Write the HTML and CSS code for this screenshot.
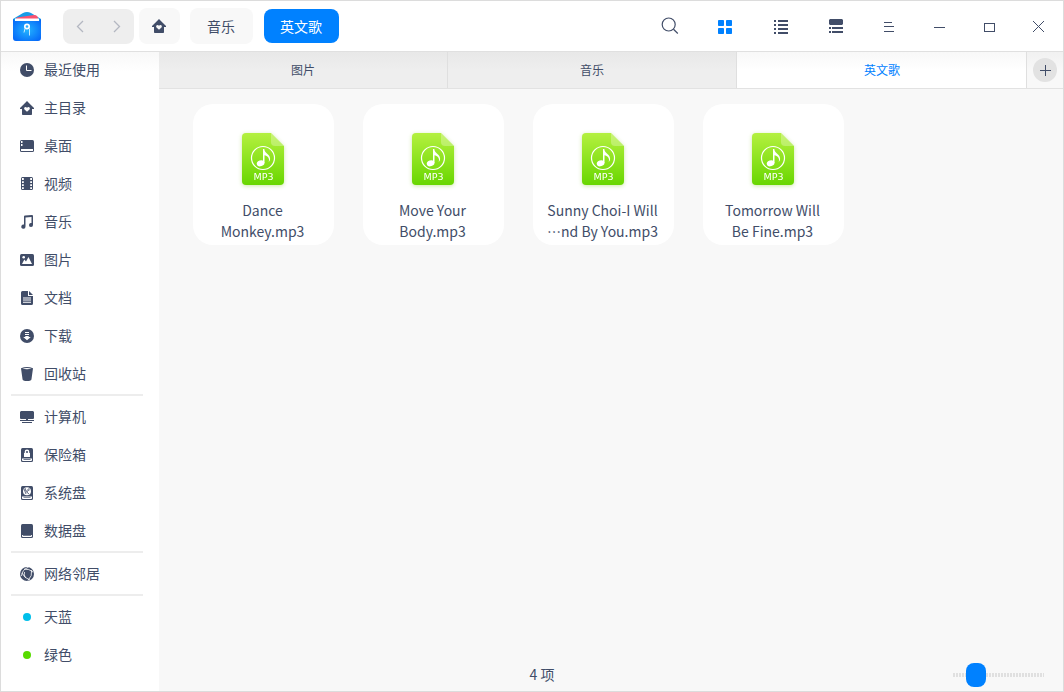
FILE: index.html
```html
<!DOCTYPE html>
<html lang="zh-CN">
<head>
<meta charset="utf-8">
<title>英文歌</title>
<link rel="stylesheet" href="styles.css">
</head>
<body>
<svg class="defs" width="0" height="0" aria-hidden="true">
  <defs>
    <linearGradient id="green" x1="0" y1="0" x2="0" y2="1"><stop offset="0" stop-color="#b4f03f"/><stop offset="1" stop-color="#68d600"/></linearGradient>
    <radialGradient id="bag" cx=".5" cy=".5" r=".65"><stop offset="0" stop-color="#23b4ff"/><stop offset="1" stop-color="#0566f8"/></radialGradient>
    <symbol id="home" viewBox="0 0 14 14"><path fill-rule="evenodd" d="M7 0l2.7 2.7L14 7v1h-2v5.2a.8.8 0 0 1-.8.8H2.8a.8.8 0 0 1-.8-.8V8H0V7l4.300-4.300zM7 10.800l2.500-2.400c1.300-1.500-.9-3.400-2.500-1.700-1.600-1.700-3.800.2-2.500 1.700z"/></symbol>
    <symbol id="mp3" viewBox="0 0 52 62">
      <path fill="url(#green)" d="M9 4h25l13 13v35a4 4 0 0 1-4 4H9a4 4 0 0 1-4-4V8a4 4 0 0 1 4-4z"/>
      <path fill="#fff" fill-opacity=".28" d="M34 4l13 13h-9a4 4 0 0 1-4-4z"/>
      <circle cx="26" cy="29" r="11.500" fill="none" stroke="#fff" stroke-width="1.200"/>
      <ellipse cx="23.600" cy="34.300" rx="3.900" ry="2.900" fill="#fff" transform="rotate(-20 23.600 34.300)"/>
      <path fill="#fff" d="M26 20h1.300c.2 4.500 5.700 5.200 5.800 9.500 0 1.500-.5 2.600-1.400 3.400 1.300-4.200-1.500-6-4.200-6.700V34H26z"/>
      <text x="26.500" y="51" text-anchor="middle" class="file-kind">MP3</text>
    </symbol>
  </defs>
</svg>
<div class="window">
  <header class="titlebar">
    <svg class="logo" viewBox="0 0 30 32">
      <path fill="#159ce8" d="M1 9l10-6q4-2 8 0l10 6v5H1z"/>
      <path fill="#fa5270" d="M5 7.500l17-2.500q4 0 4 4H4z"/>
      <path fill="#fff" d="M3 8.500h24v3H3z"/>
      <path fill="url(#bag)" d="M1 9l2 2h24l2-2v19q0 3-3 3H4q-3 0-3-3z"/>
      <circle cx="15" cy="16.500" r="2.200" fill="#2aaefc" stroke="#fff" stroke-width="1.700"/>
      <path fill="none" stroke="#c5eaff" stroke-width="1" d="M13 18.500l-1 4M17.500 18.500v7"/>
    </svg>
    <div class="history">
      <svg viewBox="0 0 70 34"><path d="M20 12l-5.500 5.500 5.500 5.500M51 12l5.500 5.500-5.500 5.500"/></svg>
    </div>
    <nav class="crumbs">
      <div class="crumb crumb-home"><svg class="icon"><use href="#home"/></svg></div>
      <div class="crumb crumb-folder">音乐</div>
      <div class="crumb crumb-current">英文歌</div>
    </nav>
    <div class="tools">
      <svg class="tool tool-search" viewBox="0 0 18 18"><g fill="none" stroke="#414d68" stroke-width="1.200"><circle cx="7.700" cy="7.500" r="6.500"/><path d="M12.500 12.300l4.300 4.200"/></g></svg>
      <svg class="tool tool-grid" viewBox="0 0 14 14"><rect width="6" height="6" rx=".8"/><rect x="8" width="6" height="6" rx=".8"/><rect y="8" width="6" height="6" rx=".8"/><rect x="8" y="8" width="6" height="6" rx=".8"/></svg>
      <svg class="tool tool-list" viewBox="0 0 14 14"><path d="M0 0h2v2H0zM0 4h2v2H0zM0 8h2v2H0zM0 12h2v2H0zM4 0h10v2H4zM4 4h10v2H4zM4 8h10v2H4zM4 12h10v2H4z"/></svg>
      <svg class="tool tool-detail" viewBox="0 0 14 14"><path d="M1 0h12l1 1v4l-1 1H1L0 5V1zM0 8h2v2H0zM0 12h2v2H0zM3 8h11v2H3zM3 12h11v2H3z"/></svg>
      <svg class="tool tool-menu" viewBox="0 0 10 10"><path d="M0 0h8v1H0zM0 4h10v1H0zM0 9h10v1H0z"/></svg>
      <svg class="tool tool-min" viewBox="0 0 11 1"><path d="M0 0h11v1H0z"/></svg>
      <svg class="tool tool-max" viewBox="0 0 11 9"><rect x=".5" y=".5" width="10" height="8" fill="none" stroke="#414d68"/></svg>
      <svg class="tool tool-close" viewBox="0 0 11 11"><path fill="none" stroke="#414d68" d="M0 0l11 11M11 0L0 11"/></svg>
    </div>
  </header>
  <div class="body">
    <aside class="sidebar">
      <div class="place"><svg class="icon" viewBox="0 0 14 14"><circle cx="7" cy="7" r="7"/><path class="cut-line" d="M6.500 2.500v5h5"/></svg><span>最近使用</span></div>
      <div class="place"><svg class="icon"><use href="#home"/></svg><span>主目录</span></div>
      <div class="place"><svg class="icon" viewBox="0 0 14 14"><rect y="1" width="14" height="12" rx="1.500"/><path class="cut" d="M1 2h1.500v2H1zM1 5h1.500v2H1zM1 10h12v1.500q0 .5-.5.500h-11q-.5 0-.5-.5z"/></svg><span>桌面</span></div>
      <div class="place"><svg class="icon" viewBox="0 0 14 14"><rect x="1" y="0" width="12" height="13" rx="1.500"/><path class="cut" d="M2 1h1.800v2H2zM2 4.200h1.800v1.900H2zM2 7.200h1.800v1.900H2zM2 10.200h1.800v1.800H2zM10.200 1H12v2h-1.800zM10.200 4.200H12v1.900h-1.800zM10.200 7.200H12v1.900h-1.800zM10.200 10.200H12V12h-1.800z"/></svg><span>视频</span></div>
      <div class="place"><svg class="icon" viewBox="0 0 14 14"><path d="M4 1.500q0-.9 1-1L12 0q1 0 1 1v9a2 2 0 1 1-1.500-1.900V2L5.500 2.500v9A2.100 2.100 0 1 1 4 9.600z"/></svg><span>音乐</span></div>
      <div class="place"><svg class="icon" viewBox="0 0 14 14"><rect y="1" width="14" height="12" rx="1.500"/><circle class="cut" cx="3.700" cy="4.200" r="1.300"/><path class="cut" d="M2 11l2.300-4.500L6 8.500 8.500 4l3.500 7z"/></svg><span>图片</span></div>
      <div class="place"><svg class="icon" viewBox="0 0 14 14"><path d="M2.500 0H8v5h5v7.500q0 1.500-1.500 1.500h-9Q1 14 1 12.500v-11Q1 0 2.500 0zM9 0l4 4H9z"/><path class="cut" d="M3 6.500h8v1H3zM3 8.600h8v1H3zM3 10.800h8v1H3z"/></svg><span>文档</span></div>
      <div class="place"><svg class="icon" viewBox="0 0 14 14"><circle cx="7" cy="7" r="7"/><path class="cut" d="M5 3h4v1H5zM5 5h4v1H5zM5.300 7h3.400v1h2.100L7 11.300 3.200 8h2.100z"/></svg><span>下载</span></div>
      <div class="place"><svg class="icon" viewBox="0 0 14 14"><path d="M1 1.200Q7-1.200 13 1.200L11.500 12q0 2-4.500 2t-4.500-2z"/><path class="cut" d="M2.300 1.600Q7 .2 11.700 1.600 7 3 2.300 1.600z"/></svg><span>回收站</span></div>
      <div class="rule"></div>
      <div class="place"><svg class="icon" viewBox="0 0 14 14"><path d="M1 1h12l1 1v6q0 1-1 1H1q-1 0-1-1V2zM6 9h2v2H6zM0 10h14v1H0zM2 12h10v1H2z"/></svg><span>计算机</span></div>
      <div class="place"><svg class="icon" viewBox="0 0 14 14"><rect x="1" width="12" height="14" rx="1.500"/><path class="cut" d="M2 10.500h10V12q0 1-1 1H3q-1 0-1-1zM4 5h.7V3.800a2.300 2.300 0 0 1 4.600 0V5h.7v4H4z"/><path d="M6 4.800V4a1 1 0 0 1 2 0v.8zM3.500 11.300h7v.6h-7z"/></svg><span>保险箱</span></div>
      <div class="place"><svg class="icon" viewBox="0 0 14 14"><rect x="1" width="12" height="14" rx="1.500"/><path class="cut" d="M2 10.500h10V12q0 1-1 1H3q-1 0-1-1z"/><circle class="cut" cx="7" cy="5.200" r="4"/><path d="M3.500 11.300h7v.6h-7z"/><path class="dark-line" d="M4 3l2 5M5 2q0 4 4 6M9 2v2.500Q7 3 7 4.500t1 1.700"/></svg><span>系统盘</span></div>
      <div class="place"><svg class="icon" viewBox="0 0 14 14"><rect x="1" width="12" height="14" rx="1.500"/><path class="cut" d="M2 11h.6l.6.700h7.600l.6-.7h.6v1q0 1-1 1H3q-1 0-1-1z"/></svg><span>数据盘</span></div>
      <div class="rule"></div>
      <div class="place"><svg class="icon" viewBox="0 0 14 14"><circle cx="7" cy="7" r="7"/><path class="cut-line thin" d="M8.500.2Q2 2.500 1.500 9M4 2.200Q9 1.500 13 5M2 6q2 5 8 7M11.600 3q1 6-3.600 10.500M4.500 5q-1 3 1 5.500"/></svg><span>网络邻居</span></div>
      <div class="rule"></div>
      <div class="place"><i class="tag tag-sky"></i><span>天蓝</span></div>
      <div class="place"><i class="tag tag-green"></i><span>绿色</span></div>
    </aside>
    <main class="content">
      <div class="tabs">
        <div class="tab">图片</div>
        <div class="tab">音乐</div>
        <div class="tab tab-active">英文歌</div>
        <div class="tab-add"><span class="add"><svg viewBox="0 0 11 11"><path d="M5 0h1v5h5v1H6v5H5V6H0V5h5z"/></svg></span></div>
      </div>
      <div class="files">
        <div class="file"><svg class="file-icon"><use href="#mp3"/></svg><div class="file-name">Dance<br>Monkey.mp3</div></div>
        <div class="file"><svg class="file-icon"><use href="#mp3"/></svg><div class="file-name">Move Your<br>Body.mp3</div></div>
        <div class="file"><svg class="file-icon"><use href="#mp3"/></svg><div class="file-name">Sunny Choi-I Will<br>…nd By You.mp3</div></div>
        <div class="file"><svg class="file-icon"><use href="#mp3"/></svg><div class="file-name">Tomorrow Will<br>Be Fine.mp3</div></div>
      </div>
      <footer class="status">
        <div class="count">4 项</div>
        <div class="zoom"><div class="thumb"></div></div>
      </footer>
    </main>
  </div>
</div>
</body>
</html>
```
FILE: styles.css
```css
* { box-sizing: border-box; }
body {
  margin: 0;
  font: 14px/21px "Noto Sans CJK SC", sans-serif;
  color: #414d68;
}
svg { display: block; flex: none; fill: #414d68; }
.defs { position: absolute; }
.window {
  width: 1064px;
  height: 692px;
  border: 1px solid #dcdcdc;
  background: #f8f8f8;
  display: flex;
  flex-direction: column;
}

/* Title bar */
.titlebar {
  height: 51px;
  flex: none;
  background: #fff;
  border-bottom: 1px solid #e0e0e0;
  display: flex;
  align-items: center;
  padding-left: 11px;
}
.logo { width: 30px; height: 32px; }
.history {
  width: 71px;
  height: 35px;
  margin: 0 5.500px 0 20.500px;
  border-radius: 8px;
  background: #eee;
}
.history svg { width: 70px; height: 34px; fill: none; stroke: #b3b7c1; stroke-width: 1.300; }
.crumbs { display: flex; align-items: center; }
.crumb {
  height: 36px;
  border-radius: 8px;
  background: #f8f8f8;
  display: flex;
  align-items: center;
  justify-content: center;
}
.crumb-home { width: 41px; padding-right: 1px; }
.crumb-folder { width: 63px; margin: 0 11px 0 10px; padding-right: 1px; }
.crumb-current { width: 75px; height: 34px; padding-right: 1px; background: #0081ff; color: #fff; }
.icon { width: 14px; height: 14px; }
.tools { display: flex; align-items: center; margin-left: auto; padding-right: 19px; }
.tool-search { width: 18px; height: 18px; margin-right: 39px; }
.tool-grid { width: 14px; height: 14px; fill: #0081ff; margin: 2px 42px 0 0; }
.tool-list { width: 14px; height: 14px; margin: 2px 41px 0 0; }
.tool-detail { width: 14px; height: 14px; margin-right: 41px; }
.tool-menu { width: 10px; height: 10px; margin: 2px 40px 0 0; }
.tool-min { width: 11px; height: 1px; margin: 3px 39px 0 0; }
.tool-max { width: 11px; height: 9px; margin: 3px 38px 0 0; }
.tool-close { width: 11px; height: 11px; margin-top: 1px; }

.body { display: flex; flex: 1; min-height: 0; }

/* Sidebar */
.sidebar {
  width: 158px;
  flex: none;
  background: linear-gradient(#f8f8f8, #fff 20px);
}
.place { height: 38px; display: flex; align-items: center; gap: 10px; padding-left: 19px; }
.place span { padding-bottom: 1px; }
.place:first-child { height: 37px; padding-bottom: 1px; }
.rule { width: 132px; height: 2px; margin: 1px 0 2px 10px; background: #ededed; }
.cut { fill: #fff; }
.cut-line { fill: none; stroke: #fff; stroke-width: 1; }
.thin { stroke-width: .8; }
.dark-line { fill: none; stroke: #414d68; stroke-width: .8; }
.tag { width: 8px; height: 8px; margin: 0 3px; border-radius: 50%; }
.tag-sky { background: #00bfea; }
.tag-green { background: #58db00; }

/* Tabs */
.content { flex: 1; min-width: 0; display: flex; flex-direction: column; }
.tabs { display: flex; height: 37px; flex: none; border-bottom: 1px solid #e2e2e2; font-size: 12px; }
.tab {
  width: 289px;
  padding-bottom: 1px;
  border-right: 1px solid #dfdfdf;
  background: linear-gradient(#e8e8e8, #eee 18px);
  display: flex;
  align-items: center;
  justify-content: center;
}
.tab-active { width: 290px; padding-left: 1px; background: linear-gradient(#f8f8f8, #fff 18px); color: #0081ff; }
.tab-add { flex: 1; display: flex; align-items: center; justify-content: center; background: linear-gradient(#f1f1f1, #f8f8f8 18px); }
.add {
  width: 24px;
  height: 24px;
  border-radius: 50%;
  background: #e2e2e2;
  display: flex;
  align-items: center;
  justify-content: center;
}
.add svg { width: 11px; height: 11px; }

/* Files */
.files { flex: 1; display: flex; gap: 29px; padding: 15px 0 0 34px; }
.file {
  width: 141px;
  height: 141px;
  border: .5px solid transparent;
  border-radius: 20px;
  background: #fff;
  display: flex;
  flex-direction: column;
  align-items: center;
  padding: 24px 1px 0 0;
}
.file-icon { width: 52px; height: 62px; filter: drop-shadow(0 1px 2px rgba(110, 190, 0, .35)); }
.file-kind { font: 9.500px "DejaVu Sans", sans-serif; fill: #fff; }
.file-name { margin: 9px 1px 0 0; text-align: center; white-space: nowrap; }

/* Status bar */
.status { height: 32px; display: flex; align-items: center; position: relative; }
.count { width: 766px; padding-bottom: 1px; text-align: center; }
.zoom {
  width: 91px;
  height: 4px;
  margin-left: 28px;
  background: repeating-linear-gradient(90deg, #e0e0e0 0 2px, transparent 2px 3px);
}
.thumb {
  position: relative;
  top: -10px;
  left: 13px;
  width: 20px;
  height: 24px;
  border-radius: 8px;
  background: #0081ff;
}
```
